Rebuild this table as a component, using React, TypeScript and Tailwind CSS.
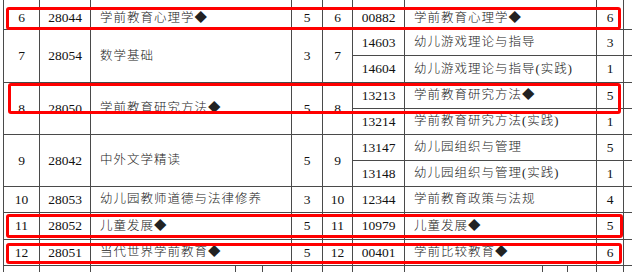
import React from 'react';

interface Course {
  code: string;
  name: string;
  credit: number;
}

interface Row {
  no: number;
  left: Course;
  right: Course[];
}

const rows: Row[] = [
  { no: 6, left: { code: '28044', name: '学前教育心理学◆', credit: 5 }, right: [{ code: '00882', name: '学前教育心理学◆', credit: 6 }] },
  {
    no: 7,
    left: { code: '28054', name: '数学基础', credit: 3 },
    right: [
      { code: '14603', name: '幼儿游戏理论与指导', credit: 3 },
      { code: '14604', name: '幼儿游戏理论与指导(实践)', credit: 1 },
    ],
  },
  {
    no: 8,
    left: { code: '28050', name: '学前教育研究方法◆', credit: 5 },
    right: [
      { code: '13213', name: '学前教育研究方法◆', credit: 5 },
      { code: '13214', name: '学前教育研究方法(实践)', credit: 1 },
    ],
  },
  {
    no: 9,
    left: { code: '28042', name: '中外文学精读', credit: 5 },
    right: [
      { code: '13147', name: '幼儿园组织与管理', credit: 5 },
      { code: '13148', name: '幼儿园组织与管理(实践)', credit: 1 },
    ],
  },
  { no: 10, left: { code: '28053', name: '幼儿园教师道德与法律修养', credit: 3 }, right: [{ code: '12344', name: '学前教育政策与法规', credit: 4 }] },
  { no: 11, left: { code: '28052', name: '儿童发展◆', credit: 5 }, right: [{ code: '10979', name: '儿童发展◆', credit: 5 }] },
  { no: 12, left: { code: '28051', name: '当代世界学前教育◆', credit: 5 }, right: [{ code: '00401', name: '学前比较教育◆', credit: 6 }] },
];

const cell = 'border-r border-b border-[#4a4a4a] flex items-center';
const nameCls = 'col-span-3 pl-[9px] text-[12.5px] tracking-[1px] font-light text-[#222]';

const Cell: React.FC<{ className?: string; first?: boolean; children?: React.ReactNode }> = ({ className = '', first, children }) => (
  <div className={`${cell} ${first ? 'pt-[7px]' : ''} ${className}`}>{children}</div>
);

const App: React.FC = () => {
  return (
    <div
      className="relative w-[632px] h-[272px] overflow-hidden bg-white text-[13.5px] leading-none text-[#111]"
      style={{ fontFamily: '"Liberation Serif", "Noto Sans CJK SC", serif' }}
    >
      <div className="ml-[3px] border-l border-[#4a4a4a] grid grid-cols-[36px_51px_145px_27px_29px_31px_30px_52px_138px_25px_29px_27px_40px] grid-rows-[30px_26px_27px_26px_26px_26px_26px_26px_27px_26px_20px]">
        {rows.map((r, i) => {
          const span = r.right.length === 2 ? 'row-span-2' : '';
          const first = i === 0;
          return (
            <React.Fragment key={r.no}>
              <Cell first={first} className={`${span} justify-center`}>{r.no}</Cell>
              <Cell first={first} className={`${span} justify-center`}>{r.left.code}</Cell>
              <Cell first={first} className={`${span} ${nameCls}`}>{r.left.name}</Cell>
              <Cell first={first} className={`${span} justify-center`}>{r.left.credit}</Cell>
              <Cell first={first} className={`${span} justify-center`}>{r.no}</Cell>
              {r.right.map((c) => (
                <React.Fragment key={c.code}>
                  <Cell first={first} className="justify-center">{c.code}</Cell>
                  <Cell first={first} className={nameCls}>{c.name}</Cell>
                  <Cell first={first} className="justify-center">{c.credit}</Cell>
                  <Cell first={first} />
                </React.Fragment>
              ))}
            </React.Fragment>
          );
        })}
        {Array.from({ length: 13 }).map((_, i) => (
          <div key={i} className="border-r border-[#4a4a4a]" />
        ))}
      </div>

      <div className="absolute left-[6px] top-[7px] w-[615px] h-[23px] border-[3px] border-[#ff0000] rounded-[3px]" />
      <div className="absolute left-[8px] top-[83px] w-[613px] h-[31px] border-[3px] border-[#ff0000] rounded-[3px]" />
      <div className="absolute left-[6px] top-[214px] w-[617px] h-[24px] border-[3px] border-[#ff0000] rounded-[3px]" />
      <div className="absolute left-[6px] top-[243px] w-[616px] h-[21px] border-[3px] border-[#ff0000] rounded-[3px]" />
    </div>
  );
};

export default App;
